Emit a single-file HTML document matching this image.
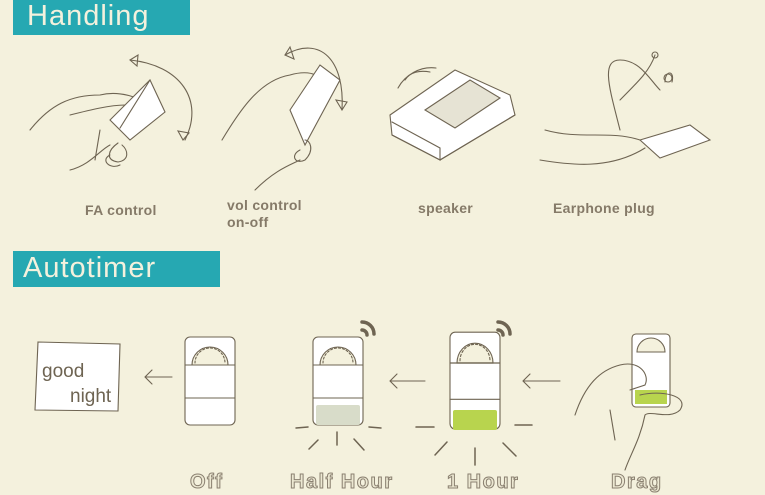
<!DOCTYPE html>
<html><head><meta charset="utf-8"><style>
html,body{margin:0;padding:0}
body{width:765px;height:495px;background:#f4f1dd;position:relative;overflow:hidden;font-family:"Liberation Sans",sans-serif}
.hd{position:absolute;background:#26a8b2;color:#f4f1dd;font-size:29px;letter-spacing:1px;line-height:1}
.lb{position:absolute;color:#857a68;font-size:14px;font-weight:bold;letter-spacing:.3px;line-height:17px}
.bl{position:absolute;color:#ece8d2;font-size:20px;font-weight:bold;letter-spacing:1.5px;-webkit-text-stroke:1px #8a8070;line-height:1}
svg{position:absolute;left:0;top:0}
</style></head><body>
<div class="hd" style="left:13px;top:0;width:177px;height:35px"><span style="position:absolute;left:14px;top:2px">Handling</span></div>
<div class="hd" style="left:13px;top:251px;width:207px;height:36px"><span style="position:absolute;left:10px;top:3px">Autotimer</span></div>

<svg width="765" height="495" fill="none" stroke="#6e6452" stroke-width="1.1" stroke-linecap="round">
<defs>
<g id="dev">
<rect x="0" y="0" width="50" height="88" rx="5" fill="#fff"/>
<path d="M7 28 A18 18 0 0 1 43 28 Z" fill="#f4f1dd"/>
<path d="M10 26 A15 15 0 0 1 40 26" stroke-dasharray="2 2"/>
<line x1="0" y1="28" x2="50" y2="28"/>
<line x1="0" y1="61" x2="50" y2="61"/>
</g>
</defs>
<path d="M30 130 C50 105 70 95 100 95 C120 90 140 98 150 105"/>
<path d="M70 115 C90 110 110 105 125 105"/>
<path d="M70 170 C90 165 100 150 110 145 M95 160 L100 130"/>
<path d="M110 120 L150 80 L165 112 L130 140 Z" fill="#fff"/>
<path d="M120 128 L150 80" />
<path d="M118 143 C108 150 105 160 118 162 C130 160 128 150 122 145 M110 155 C100 160 110 170 120 165"/>
<path d="M130 60 C180 65 205 100 185 140"/>
<path d="M130 60 L138 55 L137 66 Z"/>
<path d="M183 140 L178 131 L189 133 Z"/>
<path d="M222 140 C240 110 260 80 290 75 C300 72 310 72 315 75"/>
<path d="M290 110 L320 65 L340 80 L305 145 Z" fill="#fff"/>
<path d="M300 150 C290 155 295 165 305 160 C315 150 310 140 305 140"/>
<path d="M255 190 C275 170 290 165 300 160"/>
<path d="M285 55 C320 35 345 60 342 110"/>
<path d="M285 55 L290 47 L294 59 Z"/>
<path d="M342 110 L336 100 L347 102 Z"/>
<path d="M390 115 L455 70 L510 95 L515 115 L440 160 L392 135 Z" fill="#fff"/>
<path d="M425 110 L470 80 L500 98 L455 128 Z" fill="#e6e3d4"/>
<path d="M392 135 L440 160 L440 148 L392 122 M440 160 L515 115"/>
<path d="M405 80 C410 72 420 70 430 72 M398 88 C405 75 420 66 436 68"/>
<path d="M640 140 L690 125 L710 140 L660 158 Z" fill="#fff"/>
<path d="M540 160 C570 165 610 170 645 148 M545 130 C580 140 610 130 640 140"/>
<path d="M620 130 C610 90 600 60 620 60 C640 60 650 80 660 90 M665 82 C665 70 675 70 672 82 M620 100 C640 80 650 70 655 55"/>
<circle cx="668" cy="78" r="4"/>
<circle cx="655" cy="55" r="3"/>
<path d="M38 342 L120 344 L118 411 L35 410 Z" fill="#fff"/>
<text x="42" y="377" font-family="Liberation Sans" font-size="19" fill="#6e6452" stroke="none">good</text>
<text x="70" y="402" font-family="Liberation Sans" font-size="19" fill="#6e6452" stroke="none">night</text>
<path d="M172 377 L145 377 M152 370 L145 377 L152 384"/>
<path d="M425 381 L390 381 M397 374 L390 381 L397 388"/>
<path d="M560 381 L523 381 M530 374 L523 381 L530 388"/>
<use href="#dev" x="185" y="337"/>
<use href="#dev" x="313" y="337"/>
<rect x="316" y="405" width="44" height="20" rx="2" fill="#d8dcc9" stroke="none"/>
<use href="#dev" x="450" y="335" transform="scale(1,1.1) translate(0,-33)"/>
<rect x="453" y="410" width="44" height="20" rx="2" fill="#b8d44e" stroke="none"/>
<g stroke-width="1.5"><path d="M296 428 L308 427 M369 427 L381 428 M309 449 L318 440 M337 445 L337 432 M354 439 L364 450 M416 427 L434 427 M435 455 L447 442 M475 465 L475 448 M503 443 L516 456 M515 425 L532 425"/></g>
<g stroke="#6e6452" stroke-width="3.5"><path d="M362 322 A12 12 0 0 1 374 334 M362 330 A5 5 0 0 1 367 335"/><path d="M498 322 A12 12 0 0 1 510 334 M498 330 A5 5 0 0 1 503 335"/></g>
<rect x="632" y="334" width="38" height="73" rx="4" fill="#fff"/>
<path d="M637 352 A14 14 0 0 1 665 352 Z" fill="#f4f1dd"/>
<rect x="635" y="390" width="32" height="14" fill="#b8d44e" stroke="none"/>
<path d="M575 415 C585 385 600 370 620 365 C640 360 650 375 645 385 L630 390 M640 395 C660 390 690 395 680 410 C670 420 650 410 645 415 C640 440 630 455 625 470 M610 410 L615 440"/>
</svg>

<div class="lb" style="left:85px;top:202px">FA control</div>
<div class="lb" style="left:227px;top:197px">vol control<br>on-off</div>
<div class="lb" style="left:418px;top:200px">speaker</div>
<div class="lb" style="left:553px;top:200px">Earphone plug</div>
<div class="bl" style="left:190px;top:472px">Off</div>
<div class="bl" style="left:290px;top:472px">Half Hour</div>
<div class="bl" style="left:447px;top:472px">1 Hour</div>
<div class="bl" style="left:611px;top:472px">Drag</div>
</body></html>
